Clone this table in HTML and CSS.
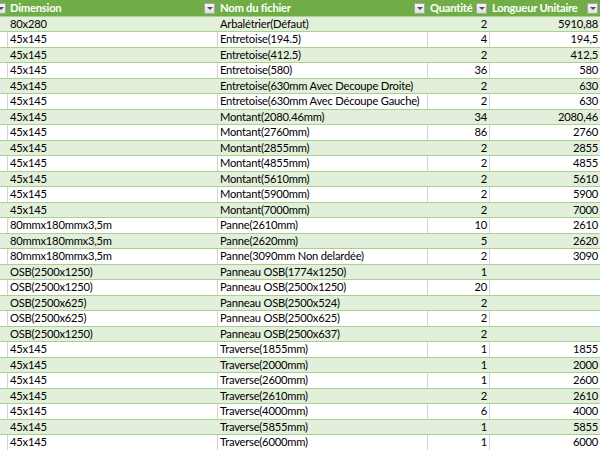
FILE: index.html
```html
<!DOCTYPE html>
<html>
<head>
<meta charset="utf-8">
<link rel="stylesheet" href="styles.css">
</head>
<body>
<div class="sheet">
  <div class="row head">
    <div class="c"><span class="fb"></span></div>
    <div class="c">Dimension<span class="fb"></span></div>
    <div class="c">Nom du fichier<span class="fb"></span></div>
    <div class="c">Quantité<span class="fb"></span></div>
    <div class="c">Longueur Unitaire<span class="fb"></span></div>
  </div>
  <div class="row"><div class="c"></div><div class="c">80x280</div><div class="c">Arbalétrier(Défaut)</div><div class="c n">2</div><div class="c n">5910,88</div></div>
  <div class="row"><div class="c"></div><div class="c">45x145</div><div class="c">Entretoise(194.5)</div><div class="c n">4</div><div class="c n">194,5</div></div>
  <div class="row"><div class="c"></div><div class="c">45x145</div><div class="c">Entretoise(412.5)</div><div class="c n">2</div><div class="c n">412,5</div></div>
  <div class="row"><div class="c"></div><div class="c">45x145</div><div class="c">Entretoise(580)</div><div class="c n">36</div><div class="c n">580</div></div>
  <div class="row"><div class="c"></div><div class="c">45x145</div><div class="c">Entretoise(630mm Avec Decoupe Droite)</div><div class="c n">2</div><div class="c n">630</div></div>
  <div class="row"><div class="c"></div><div class="c">45x145</div><div class="c">Entretoise(630mm Avec Découpe Gauche)</div><div class="c n">2</div><div class="c n">630</div></div>
  <div class="row"><div class="c"></div><div class="c">45x145</div><div class="c">Montant(2080.46mm)</div><div class="c n">34</div><div class="c n">2080,46</div></div>
  <div class="row"><div class="c"></div><div class="c">45x145</div><div class="c">Montant(2760mm)</div><div class="c n">86</div><div class="c n">2760</div></div>
  <div class="row"><div class="c"></div><div class="c">45x145</div><div class="c">Montant(2855mm)</div><div class="c n">2</div><div class="c n">2855</div></div>
  <div class="row"><div class="c"></div><div class="c">45x145</div><div class="c">Montant(4855mm)</div><div class="c n">2</div><div class="c n">4855</div></div>
  <div class="row"><div class="c"></div><div class="c">45x145</div><div class="c">Montant(5610mm)</div><div class="c n">2</div><div class="c n">5610</div></div>
  <div class="row"><div class="c"></div><div class="c">45x145</div><div class="c">Montant(5900mm)</div><div class="c n">2</div><div class="c n">5900</div></div>
  <div class="row"><div class="c"></div><div class="c">45x145</div><div class="c">Montant(7000mm)</div><div class="c n">2</div><div class="c n">7000</div></div>
  <div class="row"><div class="c"></div><div class="c">80mmx180mmx3,5m</div><div class="c">Panne(2610mm)</div><div class="c n">10</div><div class="c n">2610</div></div>
  <div class="row"><div class="c"></div><div class="c">80mmx180mmx3,5m</div><div class="c">Panne(2620mm)</div><div class="c n">5</div><div class="c n">2620</div></div>
  <div class="row"><div class="c"></div><div class="c">80mmx180mmx3,5m</div><div class="c">Panne(3090mm Non delardée)</div><div class="c n">2</div><div class="c n">3090</div></div>
  <div class="row"><div class="c"></div><div class="c">OSB(2500x1250)</div><div class="c">Panneau OSB(1774x1250)</div><div class="c n">1</div><div class="c n"></div></div>
  <div class="row"><div class="c"></div><div class="c">OSB(2500x1250)</div><div class="c">Panneau OSB(2500x1250)</div><div class="c n">20</div><div class="c n"></div></div>
  <div class="row"><div class="c"></div><div class="c">OSB(2500x625)</div><div class="c">Panneau OSB(2500x524)</div><div class="c n">2</div><div class="c n"></div></div>
  <div class="row"><div class="c"></div><div class="c">OSB(2500x625)</div><div class="c">Panneau OSB(2500x625)</div><div class="c n">2</div><div class="c n"></div></div>
  <div class="row"><div class="c"></div><div class="c">OSB(2500x1250)</div><div class="c">Panneau OSB(2500x637)</div><div class="c n">2</div><div class="c n"></div></div>
  <div class="row"><div class="c"></div><div class="c">45x145</div><div class="c">Traverse(1855mm)</div><div class="c n">1</div><div class="c n">1855</div></div>
  <div class="row"><div class="c"></div><div class="c">45x145</div><div class="c">Traverse(2000mm)</div><div class="c n">1</div><div class="c n">2000</div></div>
  <div class="row"><div class="c"></div><div class="c">45x145</div><div class="c">Traverse(2600mm)</div><div class="c n">1</div><div class="c n">2600</div></div>
  <div class="row"><div class="c"></div><div class="c">45x145</div><div class="c">Traverse(2610mm)</div><div class="c n">2</div><div class="c n">2610</div></div>
  <div class="row"><div class="c"></div><div class="c">45x145</div><div class="c">Traverse(4000mm)</div><div class="c n">6</div><div class="c n">4000</div></div>
  <div class="row"><div class="c"></div><div class="c">45x145</div><div class="c">Traverse(5855mm)</div><div class="c n">1</div><div class="c n">5855</div></div>
  <div class="row"><div class="c"></div><div class="c">45x145</div><div class="c">Traverse(6000mm)</div><div class="c n">1</div><div class="c n">6000</div></div>
</div>
</body>
</html>
```
FILE: styles.css
```css
html, body {
  margin: 0;
  padding: 0;
  background: #ffffff;
  overflow: hidden;
}
.sheet {
  width: 601px;
  font-family: Lato, "Liberation Sans", sans-serif;
  font-size: 11.2px;
  letter-spacing: -0.22px;
  color: #000000;
}
.row {
  display: grid;
  grid-template-columns: 8px 210px 210px 62px 111px;
  height: 15.5px;
  box-sizing: border-box;
  border-top: 1px solid #a9d08e;
}
.row:nth-child(even) {
  background: #e2efda;
}
.row:nth-child(odd) .c {
  border-right: 1px solid #d4d4d4;
}
.row:nth-child(even) .c {
  border-right: 1px solid #e2efda;
}
.c {
  position: relative;
  padding: 0 2px;
  line-height: 14.5px;
  white-space: nowrap;
  overflow: hidden;
  box-sizing: border-box;
}
.n {
  text-align: right;
}
.row.head {
  background: #70ad47;
  border-top: none;
  height: 15.5px;
  color: #ffffff;
  font-weight: bold;
}
.row.head .c {
  border-right: 1px solid #70ad47;
  line-height: 15.5px;
}
.fb {
  position: absolute;
  right: 2px;
  top: 3px;
  width: 11px;
  height: 11px;
  box-sizing: border-box;
  border: 1px solid #a6a6a6;
  background: linear-gradient(#f7f7f7, #dedede);
}
.fb::after {
  content: "";
  position: absolute;
  left: 2px;
  top: 3px;
  border-left: 3px solid transparent;
  border-right: 3px solid transparent;
  border-top: 3px solid #505050;
}
.row.head .c:first-child .fb {
  right: 1px;
}
```
